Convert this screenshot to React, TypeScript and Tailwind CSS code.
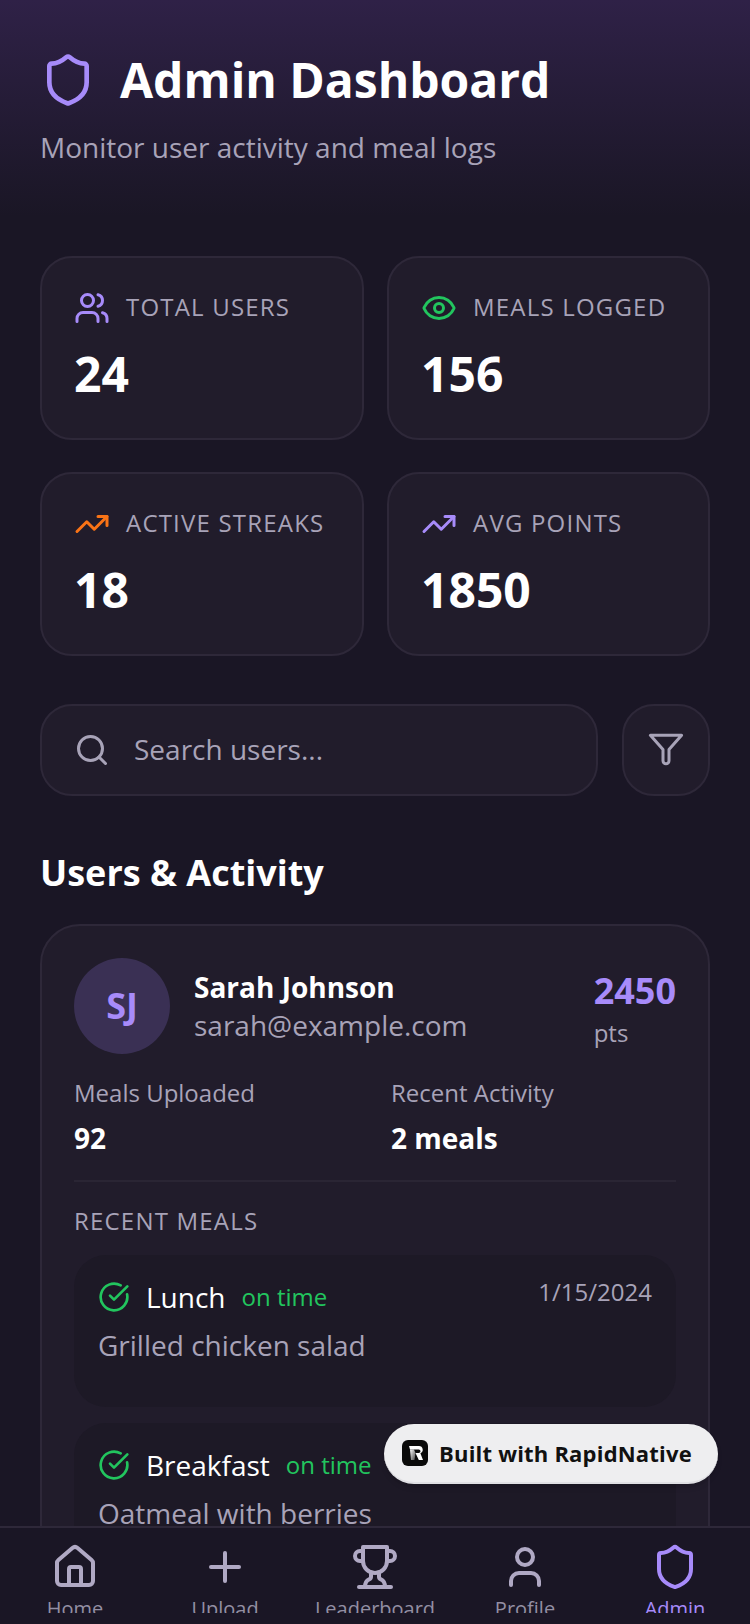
import { CircleCheckBig, Eye, House, Plus, Search, Shield, TrendingUp, User, Users } from 'lucide-react';

function FunnelIcon({ size = 36, className = '' }: { size?: number; className?: string }) {
  return (
    <svg width={size} height={size} viewBox="0 0 24 24" fill="none" stroke="currentColor" strokeWidth={2} strokeLinecap="round" strokeLinejoin="round" className={className}>
      <path d="M1.6 2.2h20.8L14 11.7v7.5a2 2 0 0 1-4 0v-7.5z" />
    </svg>
  );
}

function TrophyIcon({ size = 48, className = '' }: { size?: number; className?: string }) {
  return (
    <svg width={size} height={size} viewBox="0 0 24 24" fill="none" stroke="currentColor" strokeWidth={2} strokeLinecap="round" strokeLinejoin="round" className={className}>
      <path d="M6 9H4.5a2.5 2.5 0 0 1 0-5H6" />
      <path d="M18 9h1.5a2.5 2.5 0 0 0 0-5H18" />
      <path d="M4 22h16" />
      <path d="M10 14.66V17c0 .55-.47.98-.97 1.21C7.85 18.75 7 20.24 7 22" />
      <path d="M14 14.66V17c0 .55.47.98.97 1.21C16.15 18.75 17 20.24 17 22" />
      <path d="M18 2H6v7a6 6 0 0 0 12 0V2Z" />
    </svg>
  );
}

function RapidNativeLogo() {
  return (
    <svg width={26} height={26} viewBox="0 0 26 26" className="shrink-0">
      <defs>
        <linearGradient id="rn-fade" x1="0" y1="0" x2="1" y2="1">
          <stop offset="0" stopColor="#ffffff" />
          <stop offset="1" stopColor="#ffffff" stopOpacity="0.25" />
        </linearGradient>
      </defs>
      <rect width={26} height={26} rx={6} fill="#0a0a0a" />
      <path d="M7 6h10a3.8 3.8 0 0 1 1.4 7.3L21 20h-4.2l-3.3-7h3.2a1.2 1.2 0 0 0 0-3.6H8z" fill="#ffffff" />
      <path d="M8 9.4h4l1.5 3.6-1 7H9z" fill="url(#rn-fade)" />
    </svg>
  );
}

const stats = [
  { label: 'TOTAL USERS', value: '24', icon: Users, color: 'text-[#a78bfa]' },
  { label: 'MEALS LOGGED', value: '156', icon: Eye, color: 'text-[#22c55e]' },
  { label: 'ACTIVE STREAKS', value: '18', icon: TrendingUp, color: 'text-[#f97316]' },
  { label: 'AVG POINTS', value: '1850', icon: TrendingUp, color: 'text-[#a78bfa]' },
];

const tabs = [
  { label: 'Home', icon: House },
  { label: 'Upload', icon: Plus },
  { label: 'Leaderboard', icon: TrophyIcon },
  { label: 'Profile', icon: User },
  { label: 'Admin', icon: Shield, active: true },
];

function StatCard({ label, value, icon: Icon, color }: (typeof stats)[number]) {
  return (
    <div className="h-[184px] rounded-[32px] border-2 border-[#2e2839] bg-[#211c2b] px-[32px] pt-[32px]">
      <div className="flex h-[36px] items-center gap-[16px]">
        <Icon size={36} strokeWidth={2} className={color} />
        <span className="pb-[2px] text-[24px] leading-[36px] tracking-[1.2px] text-[#a8a3b8]">{label}</span>
      </div>
      <div className="mt-[16px] text-[48px] leading-[64px] font-bold text-white">{value}</div>
    </div>
  );
}

function MealRow({ name, description, date }: { name: string; description: string; date?: string }) {
  return (
    <div className="mb-[16px] h-[152px] shrink-0 rounded-[32px] bg-[#1d1926] px-[24px] pt-[20px]">
      <div className="flex items-start justify-between">
        <div className="flex h-[44px] items-center">
          <CircleCheckBig size={32} strokeWidth={2} className="text-[#22c55e]" />
          <span className="ml-[16px] text-[28px] leading-[40px] text-white">{name}</span>
          <span className="ml-[16px] text-[24px] leading-[36px] text-[#22c55e]">on time</span>
        </div>
        {date && <span className="-mt-[1px] text-[24px] leading-[36px] text-[#a8a3b8]">{date}</span>}
      </div>
      <p className="mt-[6px] text-[28px] leading-[40px] text-[#a8a3b8]">{description}</p>
    </div>
  );
}

export default function App() {
  return (
    <div className="relative flex h-[1624px] w-[750px] flex-col overflow-hidden bg-[#1a1625] font-['Open_Sans',sans-serif]">
      <div className="min-h-0 flex-1 overflow-hidden">
        {/* Header */}
        <div className="h-[216px] bg-gradient-to-b from-[#2f2147] to-[#1a1625] px-[40px] pt-[48px]">
          <div className="flex items-center gap-[24px]">
            <Shield size={56} strokeWidth={2} className="text-[#a78bfa]" />
            <h1 className="text-[48px] leading-[64px] font-bold text-white">Admin Dashboard</h1>
          </div>
          <p className="mt-[15px] text-[28px] leading-[40px] text-[#a8a3b8]">Monitor user activity and meal logs</p>
        </div>

        <div className="px-[40px] pt-[40px]">
          {/* Stats */}
          <div className="grid grid-cols-[324px_323px] gap-x-[23px] gap-y-[32px]">
            {stats.map((s) => (
              <StatCard key={s.label} {...s} />
            ))}
          </div>

          {/* Search */}
          <div className="mt-[48px] flex gap-[24px]">
            <div className="flex h-[92px] flex-1 items-center rounded-[32px] border-2 border-[#2e2839] bg-[#211c2b] px-[32px]">
              <Search size={36} strokeWidth={2} className="text-[#a8a3b8]" />
              <span className="ml-[24px] pb-[2px] text-[28px] leading-[40px] text-[#a8a3b8]">Search users...</span>
            </div>
            <div className="flex h-[92px] w-[88px] items-center justify-center rounded-[32px] border-2 border-[#2e2839] bg-[#211c2b]">
              <FunnelIcon className="text-[#a8a3b8]" />
            </div>
          </div>

          <h2 className="mt-[51px] text-[36px] leading-[52px] font-bold text-white">Users &amp; Activity</h2>

          {/* User card */}
          <div className="mt-[25px] rounded-[40px] border-2 border-[#2e2839] bg-[#211c2b] p-[32px]">
            <div className="flex items-start">
              <div className="flex h-[96px] w-[96px] items-center justify-center rounded-full bg-[#3a3054]">
                <span className="text-[36px] leading-[48px] font-bold text-[#a78bfa]">SJ</span>
              </div>
              <div className="ml-[24px] flex-1 pt-[9px]">
                <div className="text-[28px] leading-[40px] font-bold text-white">Sarah Johnson</div>
                <div className="text-[28px] leading-[36px] text-[#a8a3b8]">sarah@example.com</div>
              </div>
              <div className="pt-[9px]">
                <div className="text-[36px] leading-[48px] font-bold text-[#a78bfa]">2450</div>
                <div className="text-[24px] leading-[36px] text-[#a8a3b8]">pts</div>
              </div>
            </div>

            <div className="mt-[21px] flex border-b-2 border-[#2a2534] pb-[22px]">
              <div className="w-[317px]">
                <div className="text-[24px] leading-[36px] text-[#a8a3b8]">Meals Uploaded</div>
                <div className="mt-[7px] text-[28px] leading-[40px] font-bold text-white">92</div>
              </div>
              <div>
                <div className="text-[24px] leading-[36px] text-[#a8a3b8]">Recent Activity</div>
                <div className="mt-[7px] text-[28px] leading-[40px] font-bold text-white">2 meals</div>
              </div>
            </div>

            <div className="mt-[21px] text-[24px] leading-[36px] tracking-[1.2px] text-[#a8a3b8]">RECENT MEALS</div>
            <div className="mt-[16px]">
              <MealRow name="Lunch" description="Grilled chicken salad" date="1/15/2024" />
              <MealRow name="Breakfast" description="Oatmeal with berries" />
            </div>
          </div>
        </div>
      </div>

      {/* Tab bar: labels are clipped by the bar's height in the reference */}
      <div className="flex h-[87px] shrink-0 items-start justify-between overflow-hidden border-t-2 border-[#2e2839] bg-[#1a1625] pt-[15px]">
        {tabs.map(({ label, icon: Icon, active }) => (
          <div key={label} className="flex w-[150px] flex-col items-center">
            <Icon size={48} className={active ? 'text-[#a78bfa]' : 'text-[#b0a9c4]'} />
            <span className={`mt-[4px] text-[20px] leading-[28px] ${active ? 'text-[#a78bfa]' : 'text-[#938fa3]'}`}>{label}</span>
          </div>
        ))}
      </div>
      <div className="h-[11px] shrink-0" />

      {/* Badge */}
      <div className="absolute top-[1424px] left-[384px] flex h-[60px] w-[334px] items-center gap-[11px] rounded-full border-b-2 border-[#e0e0e4] bg-[#eeeef0] pl-[18px] shadow-md">
        <RapidNativeLogo />
        <span className="text-[22px] leading-[32px] font-bold tracking-[0.2px] text-[#111]">Built with RapidNative</span>
      </div>
    </div>
  );
}
